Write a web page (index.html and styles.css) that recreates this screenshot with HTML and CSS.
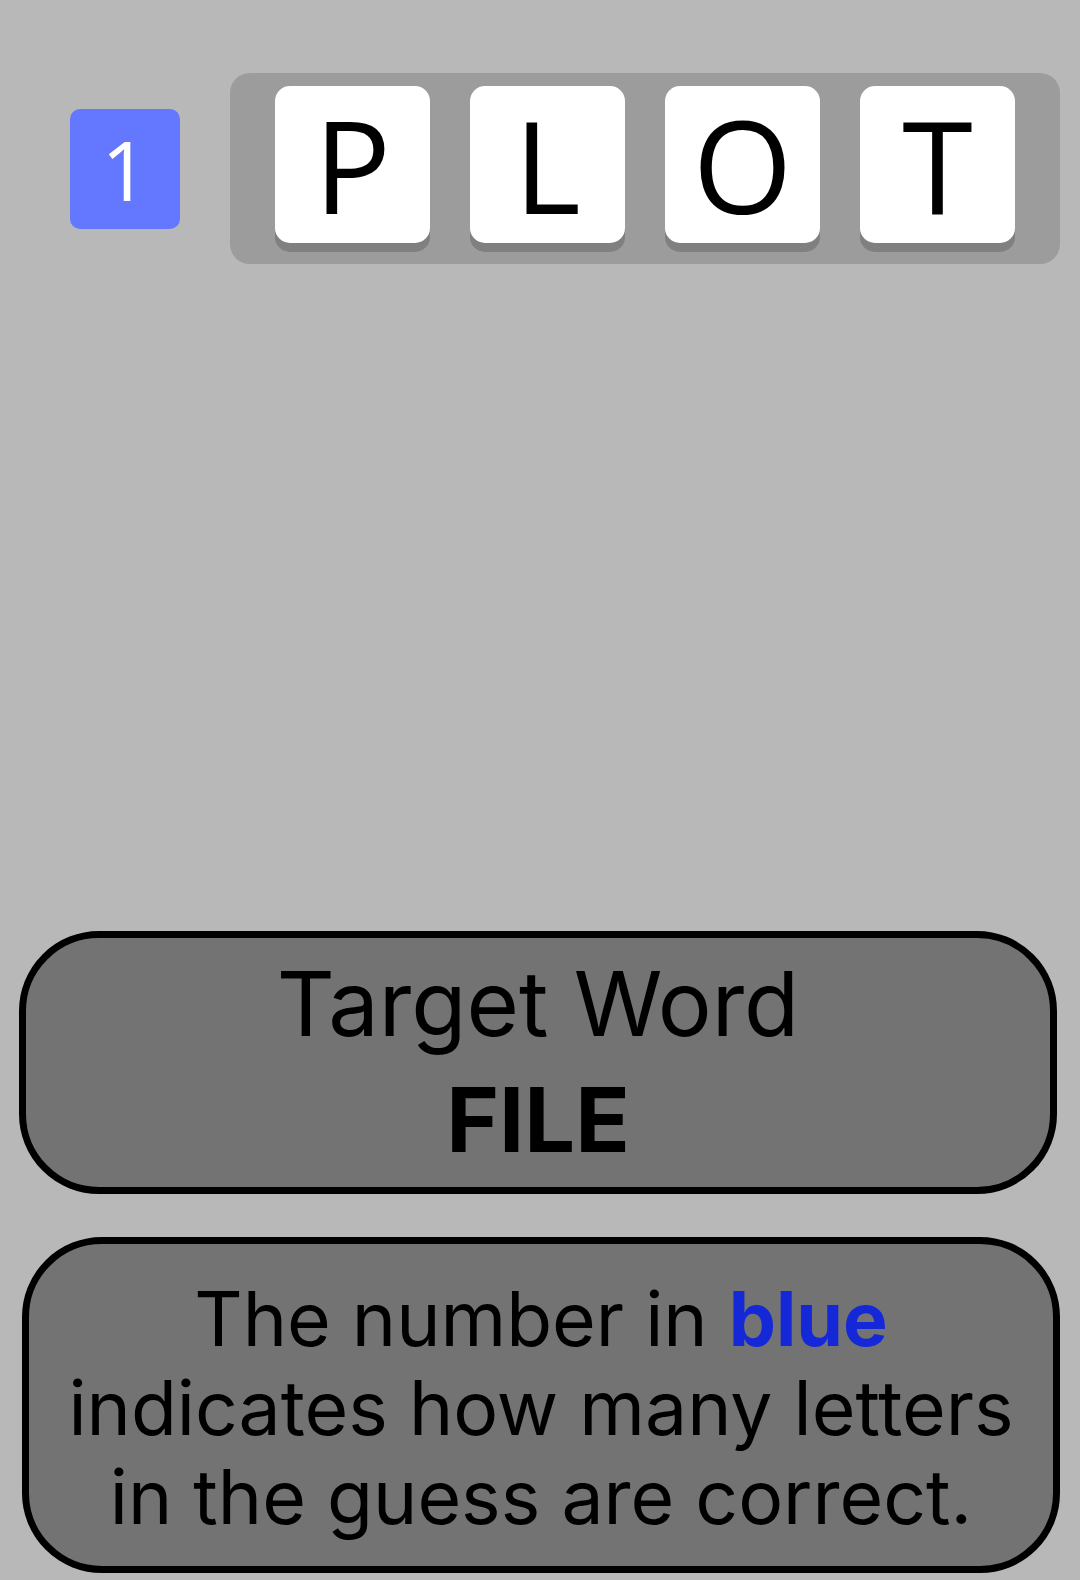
FILE: index.html
```html
<!DOCTYPE html>
<html lang="en">
<head>
<meta charset="utf-8">
<title>Guess</title>
<link rel="stylesheet" href="styles.css">
</head>
<body>
<div class="page">
  <div class="guess-row">
    <div class="count">1</div>
    <div class="tiles">
      <div class="tile">P</div>
      <div class="tile">L</div>
      <div class="tile">O</div>
      <div class="tile">T</div>
    </div>
  </div>
  <div class="panels">
    <div class="panel target">
      <div class="target-label">Target Word</div>
      <div class="target-word">FILE</div>
    </div>
    <div class="panel hint">
      The number in <span class="blue">blue</span> indicates how many letters in the guess are correct.
    </div>
  </div>
</div>
</body>
</html>
```

FILE: styles.css
```css
html, body {
  margin: 0;
  padding: 0;
  background: #b8b8b8;
}
.page {
  height: 1580px;
  display: flex;
  flex-direction: column;
  box-sizing: border-box;
  padding-bottom: 7px;
}
.guess-row {
  display: flex;
  align-items: center;
  padding: 73px 0 0 70px;
  gap: 50px;
}
.count {
  width: 110px;
  height: 120px;
  border-radius: 10px;
  background: #6478ff;
  color: #ffffff;
  font-family: "Open Sans", sans-serif;
  font-size: 82px;
  display: flex;
  align-items: center;
  justify-content: center;
}
.tiles {
  display: flex;
  gap: 40px;
  background: #9c9c9c;
  border-radius: 20px;
  padding: 13px 45px 12px 45px;
}
.tile {
  width: 155px;
  height: 157px;
  margin-bottom: 9px;
  background: #ffffff;
  border-radius: 15px;
  box-shadow: 0 9px 0 #808080;
  display: flex;
  align-items: center;
  justify-content: center;
  font-family: "Open Sans", sans-serif;
  font-size: 128px;
  color: #000000;
}
.panels {
  margin-top: auto;
  display: flex;
  flex-direction: column;
  gap: 43px;
}
.panel {
  background: #737373;
  border: 7px solid #000000;
  border-radius: 80px;
  font-family: Inter, sans-serif;
  color: #000000;
  text-align: center;
}
.target {
  margin: 0 23px 0 19px;
  padding: 11px 20px 13px;
  display: flex;
  flex-direction: column;
  gap: 7px;
  font-size: 90px;
}
.target-word {
  font-weight: 700;
}
.hint {
  margin: 0 20px 0 22px;
  padding: 30px 20px 25px;
  font-size: 75px;
  line-height: 89px;
}
.blue {
  color: #1428d8;
  font-weight: 700;
}
```
